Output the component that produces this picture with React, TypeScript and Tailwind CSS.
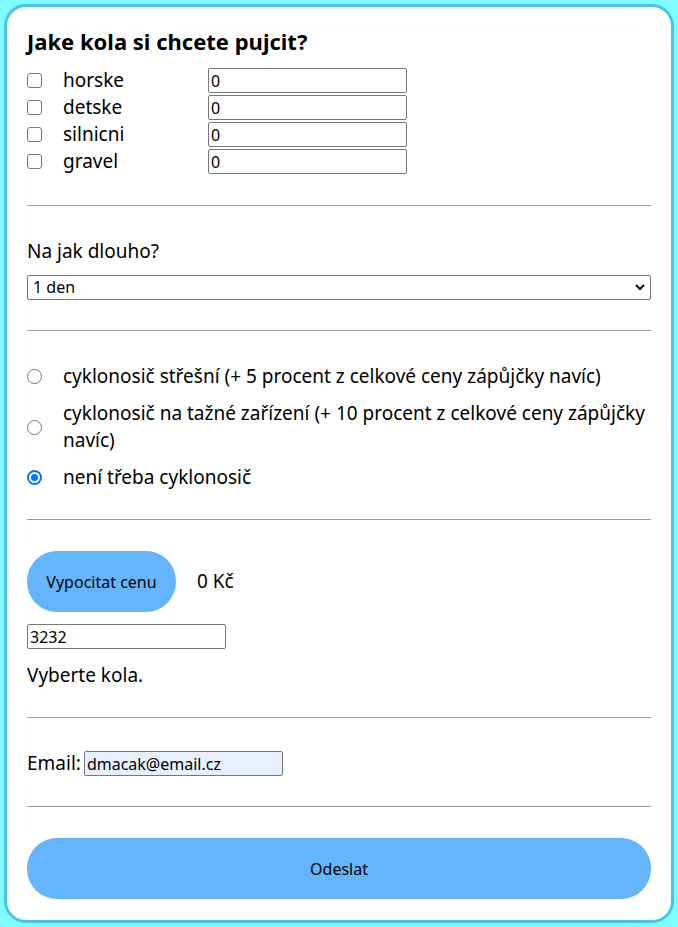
import { useState } from "react";

const bikes = ["horske", "detske", "silnicni", "gravel"];

const racks = [
  "cyklonosič střešní (+ 5 procent z celkové ceny zápůjčky navíc)",
  "cyklonosič na tažné zařízení (+ 10 procent z celkové ceny zápůjčky navíc)",
  "není třeba cyklonosič",
];

function Divider({ className = "" }: { className?: string }) {
  return <div className={`border-t border-[#9a9a9a] ${className}`} />;
}

export default function App() {
  const [rack, setRack] = useState(2);
  const [days, setDays] = useState("1");

  return (
    <div className="min-h-screen bg-[#80fcff] px-1 pt-1 pb-[3px] font-['Noto_Sans',sans-serif] text-black">
      <div className="rounded-[22px] border-[3px] border-[#48c3ec] bg-white px-5 pt-5 pb-[21px]">
        <h2 className="text-[22px] font-bold leading-[28px]">Jake kola si chcete pujcit?</h2>

        <div className="mt-[13px] flex flex-col gap-[2px]">
          {bikes.map((b) => (
            <div key={b} className="flex h-[25px] items-center">
              <span className="block h-[15px] w-[15px] shrink-0 rounded-[3px] border border-[#767676] bg-white" />
              <span className="ml-[21px] w-[145px] text-[19px] leading-[25px]">{b}</span>
              <input
                type="text"
                defaultValue="0"
                className="h-[25px] w-[199px] rounded-[2px] border border-[#767676] px-[2px] text-[16px]"
              />
            </div>
          ))}
        </div>

        <Divider className="mt-[31px]" />

        <p className="mt-8 text-[19px] leading-[27px]">Na jak dlouho?</p>
        <div className="relative mt-[10px]">
          <select
            value={days}
            onChange={(e) => setDays(e.target.value)}
            className="h-[25px] w-full appearance-none rounded-[2px] border border-[#767676] pl-[5px] text-[16px] leading-[23px]"
          >
            <option value="1">1 den</option>
            <option value="2">2 dny</option>
            <option value="7">1 týden</option>
          </select>
          <svg
            className="pointer-events-none absolute top-[8px] right-[6px]"
            width="10"
            height="8"
            viewBox="0 0 10 8"
          >
            <path d="M1 2l4 4 4-4" fill="none" stroke="#000" strokeWidth="2" />
          </svg>
        </div>

        <Divider className="mt-[30px]" />

        <div className="mt-8 flex flex-col gap-[10px]">
          {racks.map((r, i) => (
            <label key={r} className="flex items-center" onClick={() => setRack(i)}>
              {rack === i ? (
                <span className="flex h-[15px] w-[15px] shrink-0 items-center justify-center rounded-full border-2 border-[#0075ff] bg-white">
                  <span className="block h-[7px] w-[7px] rounded-full bg-[#0075ff]" />
                </span>
              ) : (
                <span className="block h-[15px] w-[15px] shrink-0 rounded-full border border-[#767676] bg-white" />
              )}
              <span className="ml-[21px] text-[19px] leading-[27px]">{r}</span>
            </label>
          ))}
        </div>

        <Divider className="mt-[28px]" />

        <div className="mt-[31px] flex items-center">
          <button className="h-[61px] w-[149px] rounded-[30px] bg-[#64b5fc] text-[16px]">
            Vypocitat cenu
          </button>
          <span className="ml-[21px] text-[19px]">0 Kč</span>
        </div>

        <input
          type="text"
          defaultValue="3232"
          className="mt-3 block h-[25px] w-[199px] rounded-[2px] border border-[#767676] px-[2px] text-[16px]"
        />

        <p className="mt-[13px] text-[19px] leading-[27px]">Vyberte kola.</p>

        <Divider className="mt-[28px]" />

        <div className="mt-[33px] flex h-[25px] items-center text-[19px]">
          <span className="mr-[3px]">Email:</span>
          <input
            type="email"
            defaultValue="dmacak@email.cz"
            className="h-[25px] w-[199px] rounded-[2px] border border-[#767676] bg-[#e8f0fe] px-[2px] text-[16px]"
          />
        </div>

        <Divider className="mt-[30px]" />

        <button className="mt-[31px] block h-[61px] w-full rounded-[30px] bg-[#64b5fc] text-[16px]">
          Odeslat
        </button>
      </div>
    </div>
  );
}
